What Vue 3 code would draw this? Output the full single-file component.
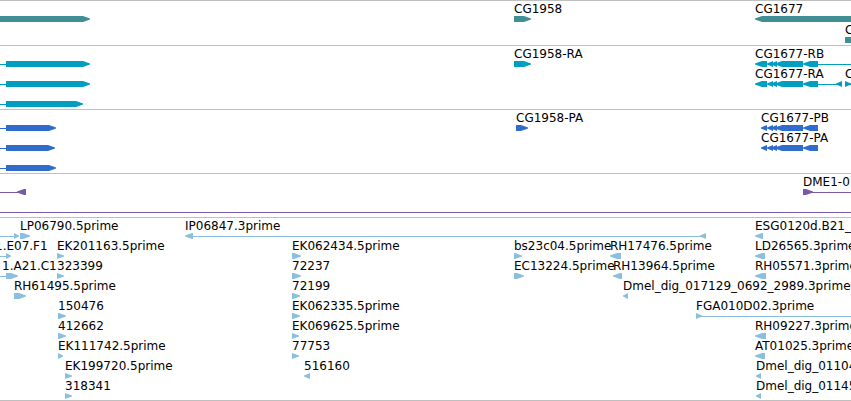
<script setup>
// Feature kinds: 'r' points right, 'l' points left, 'line' is a thin connector.
// A null end means that the feature runs on past the right edge.
const r = (x, end) => ({ kind: 'r', x, end })
const l = (x, end) => ({ kind: 'l', x, end })
const line = (x, end) => ({ kind: 'line', x, end })
const label = (x, text) => ({ x, text })
const row = (labels, features) => ({ labels, features })

const transcriptExons = [l(755, 767), l(767, 773), l(771, 777), l(775, 803), l(803, 818)]
const proteinExons = [l(761, 767), l(767, 773), l(771, 777), l(775, 803), l(803, 818)]

const tracks = [
  {
    name: 'gene',
    rows: [
      row([label(514, 'CG1958'), label(755, 'CG1677')], [r(-10, 90), r(514, 531), l(755, null)]),
      row([label(845, 'C')], [r(845, 865)]),
    ],
  },
  {
    name: 'transcript',
    rows: [
      row([label(514, 'CG1958-RA'), label(755, 'CG1677-RB')],
        [line(0, 6), r(6, 90), r(514, 531), ...transcriptExons, line(818, null)]),
      row([label(755, 'CG1677-RA'), label(845, 'C')],
        [line(0, 6), r(6, 90), ...transcriptExons, line(818, 837), l(836, 842), r(845, 851), line(849, null)]),
      row([], [line(0, 6), r(6, 83)]),
    ],
  },
  {
    name: 'protein',
    rows: [
      row([label(516, 'CG1958-PA'), label(761, 'CG1677-PB')], [line(0, 6), r(6, 56), r(516, 528), ...proteinExons]),
      row([label(761, 'CG1677-PA')], [line(0, 6), r(6, 55), ...proteinExons]),
      row([], [line(0, 6), r(6, 56)]),
    ],
  },
  {
    name: 'transposon',
    rows: [
      row([label(803, 'DME1-0')], [line(0, 18), l(17, 26), r(803, 813), line(812, null)]),
      row([], [line(0, null)]),
    ],
  },
  {
    name: 'est',
    rows: [
      row([label(20, 'LP06790.5prime'), label(185, 'IP06847.3prime'), label(755, 'ESG0120d.B21_')],
        [line(0, 14), r(14, 19), r(20, 30), l(185, 193), line(193, 701), l(700, 706), l(755, 763)]),
      row([label(-5, '1.E07.F1'), label(57, 'EK201163.5prime'), label(292, 'EK062434.5prime'), label(514, 'bs23c04.5prime'), label(610, 'RH17476.5prime'), label(755, 'LD26565.3prime')],
        [line(0, 6), r(6, 11), r(57, 64), r(292, 301), r(514, 522), l(610, 621), l(755, 765)]),
      row([label(2, '1.A21.C1'), label(57, '323399'), label(292, '72237'), label(514, 'EC13224.5prime'), label(613, 'RH13964.5prime'), label(755, 'RH05571.3prime')],
        [line(0, 6), r(6, 18), r(57, 64), r(292, 301), r(514, 524), l(613, 622), l(755, 766)]),
      row([label(14, 'RH61495.5prime'), label(292, '72199'), label(623, 'Dmel_dig_017129_0692_2989.3prime')],
        [r(14, 26), r(292, 300), l(623, 628)]),
      row([label(58, '150476'), label(292, 'EK062335.5prime'), label(696, 'FGA010D02.3prime')],
        [r(58, 66), r(292, 300), r(696, 702), line(701, null)]),
      row([label(58, '412662'), label(292, 'EK069625.5prime'), label(755, 'RH09227.3prime')],
        [r(58, 66), r(292, 299), l(755, 766)]),
      row([label(58, 'EK111742.5prime'), label(292, '77753'), label(755, 'AT01025.3prime')],
        [r(58, 63), r(292, 299), l(755, 765)]),
      row([label(65, 'EK199720.5prime'), label(304, '516160'), label(756, 'Dmel_dig_01104')],
        [r(65, 72), l(304, 310), l(756, 761)]),
      row([label(65, '318341'), label(756, 'Dmel_dig_01145')],
        [r(65, 72), l(756, 761)]),
    ],
  },
]

const FAR = 10000

function outline({ kind, x, end }) {
  const stop = end ?? FAR
  const head = Math.min(7, stop - x)
  return kind === 'r'
    ? `M${x} 0H${stop - head}L${stop} 2.5V3.5L${stop - head} 6H${x}Z`
    : `M${stop} 0H${x + head}L${x} 2.5V3.5L${x + head} 6H${stop}Z`
}
</script>

<template>
  <main class="browser">
    <section v-for="track in tracks" :key="track.name" class="track" :class="track.name">
      <div v-for="(lane, i) in track.rows" :key="i" class="lane">
        <div class="labels">
          <span v-for="item in lane.labels" :key="item.x" class="label" :style="{ left: item.x + 'px' }">{{ item.text }}</span>
        </div>
        <svg class="features" aria-hidden="true">
          <template v-for="(f, n) in lane.features" :key="n">
            <rect v-if="f.kind === 'line'" :x="f.x" y="3" :width="f.end === null ? '100%' : f.end - f.x" height="1" />
            <path v-else :d="outline(f)" />
          </template>
        </svg>
      </div>
    </section>
  </main>
</template>

<style>
body {
  margin: 0;
  background: #fff;
}
</style>

<style scoped>
.browser {
  overflow: hidden;
  border-bottom: 1px solid #bfbfbf;
  color: #000;
  font: 12px/14px "DejaVu Sans", sans-serif;
}

.track {
  display: flex;
  flex-direction: column;
  padding: 1px 0 2px;
  border-top: 1px solid #bfbfbf;
}

.labels {
  position: relative;
  height: 14px;
}

.label {
  position: absolute;
  top: 0;
  white-space: nowrap;
}

.features {
  display: block;
  width: 100%;
  height: 6px;
  overflow: hidden;
  fill: currentColor;
}

.gene {
  gap: 1px;
}

.gene .features {
  color: #408f94;
}

.transcript .features {
  color: #009fbf;
}

.protein .features {
  color: #306ccc;
}

.transposon .features {
  color: #7759a8;
}

.est {
  padding-bottom: 1px;
}

.est .features {
  color: #8bbfe0;
}
</style>
